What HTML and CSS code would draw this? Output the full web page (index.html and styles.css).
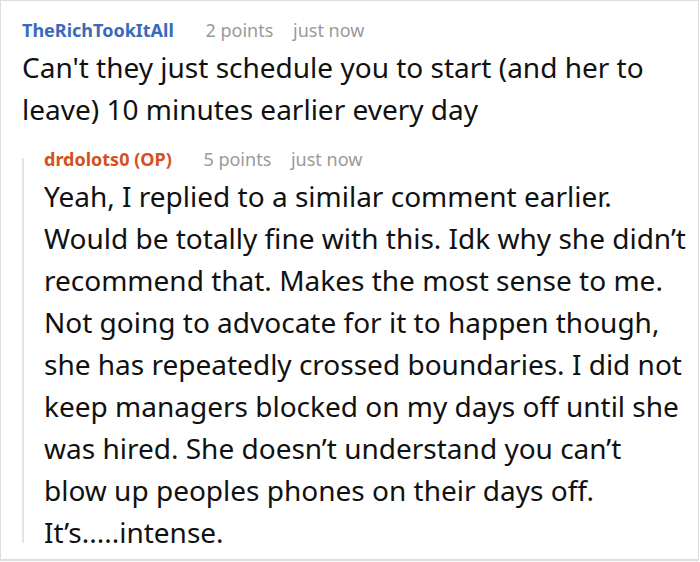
FILE: index.html
```html
<!DOCTYPE html>
<html>
<head>
<meta charset="utf-8">
<link rel="stylesheet" href="styles.css">
</head>
<body>
<div class="frame">
  <div class="comment top">
    <div class="meta">
      <span class="author blue">TheRichTookItAll</span>
      <span class="score">2 points</span>
      <span class="time">just now</span>
    </div>
    <div class="body">Can't they just schedule you to start (and her to leave) 10 minutes earlier every day</div>
    <div class="children">
      <div class="comment reply">
        <div class="meta">
          <span class="author op">drdolots0 (OP)</span>
          <span class="score">5 points</span>
          <span class="time">just now</span>
        </div>
        <div class="body">Yeah, I replied to a similar comment earlier. Would be totally fine with this. Idk why she didn’t recommend that. Makes the most sense to me. Not going to advocate for it to happen though, she has repeatedly crossed boundaries. I did not keep managers blocked on my days off until she was hired. She doesn’t understand you can’t blow up peoples phones on their days off. It’s.....intense.</div>
      </div>
    </div>
  </div>
</div>
</body>
</html>
```

FILE: styles.css
```css
html, body {
  margin: 0;
  padding: 0;
  background: #ffffff;
}
.frame {
  width: 699px;
  height: 561px;
  box-sizing: border-box;
  border: 1px solid #dedede;
  border-bottom-width: 2px;
  padding: 17px 12px 0 21px;
  overflow: hidden;
  font-family: "Noto Sans", "Open Sans", sans-serif;
}
.meta {
  font-size: 18px;
  line-height: 24px;
  white-space: nowrap;
}
.author {
  font-weight: 700;
}
.blue { color: #3a6ab8; }
.op { color: #d4511e; }
.score, .time {
  color: #9a9a9a;
}
.score { margin-left: 27px; }
.time { margin-left: 15px; }
.body {
  font-size: 28px;
  line-height: 42px;
  color: #111;
  margin-top: 4px;
}
.children {
  display: flow-root;
  margin-top: 28px;
  border-left: 2px solid #e4e4e4;
  padding-left: 20px;
}
.reply .meta {
  margin-top: -11px;
}
.reply .body {
  margin-bottom: -10px;
}
```
